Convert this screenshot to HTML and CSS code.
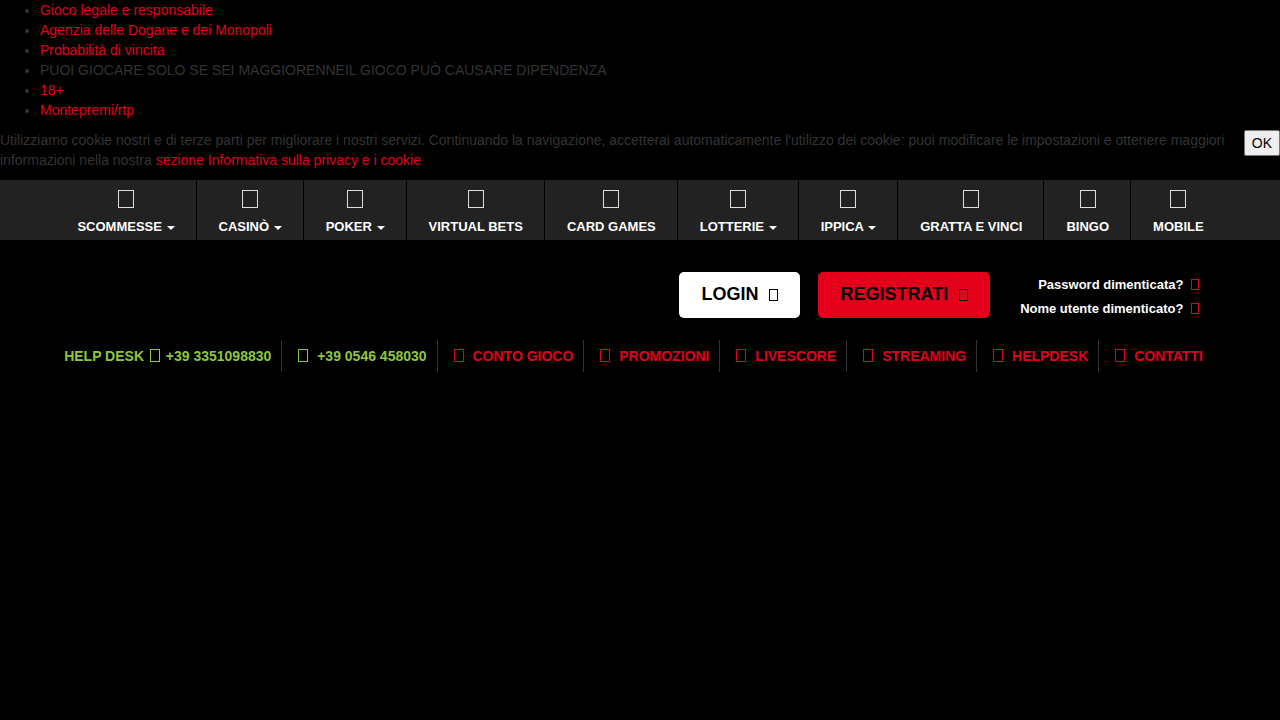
FILE: index.html
```html
<!DOCTYPE html>
<html lang="it">
<head>
<meta charset="UTF-8">
<title>Scommesse</title>
<link rel="stylesheet" href="styles.css">
</head>
<body>

<ul class="avvisi">
    <li><a href="#">Gioco legale e responsabile</a></li>
    <li><a href="#">Agenzia delle Dogane e dei Monopoli</a></li>
    <li><a href="#">Probabilità di vincita</a></li>
    <li class="grigio">PUOI GIOCARE SOLO SE SEI MAGGIORENNEIL GIOCO PUÒ CAUSARE DIPENDENZA</li>
    <li><a href="#">18+</a></li>
    <li><a href="#">Montepremi/rtp</a></li>
</ul>

<div class="cookie">
    <p class="cookie-testo">Utilizziamo cookie nostri e di terze parti per migliorare i nostri servizi. Continuando la navigazione, accetterai automaticamente l'utilizzo dei cookie: puoi modificare le impostazioni e ottenere maggiori informazioni nella nostra <a href="#">sezione Informativa sulla privacy e i cookie</a></p>
    <button class="cookie-ok">OK</button>
</div>

<nav class="menu">
    <a href="#" class="voce"><span class="icona"></span><span>SCOMMESSE <span class="caret"></span></span></a>
    <a href="#" class="voce"><span class="icona"></span><span>CASINÒ <span class="caret"></span></span></a>
    <a href="#" class="voce"><span class="icona"></span><span>POKER <span class="caret"></span></span></a>
    <a href="#" class="voce"><span class="icona"></span><span>VIRTUAL BETS</span></a>
    <a href="#" class="voce"><span class="icona"></span><span>CARD GAMES</span></a>
    <a href="#" class="voce"><span class="icona"></span><span>LOTTERIE <span class="caret"></span></span></a>
    <a href="#" class="voce"><span class="icona"></span><span>IPPICA <span class="caret"></span></span></a>
    <a href="#" class="voce"><span class="icona"></span><span>GRATTA E VINCI</span></a>
    <a href="#" class="voce"><span class="icona"></span><span>BINGO</span></a>
    <a href="#" class="voce"><span class="icona"></span><span>MOBILE</span></a>
</nav>

<div class="accesso">
    <a href="#" class="btn btn-login">LOGIN <span class="tofu"></span></a>
    <a href="#" class="btn btn-registrati">REGISTRATI <span class="tofu"></span></a>
    <div class="recupero">
        <a href="#">Password dimenticata? <span class="tofu rosso"></span></a>
        <a href="#">Nome utente dimenticato? <span class="tofu rosso"></span></a>
    </div>
</div>

<div class="servizi">
    <span class="servizio verde">HELP DESK <span class="tofu stretto"></span> +39 3351098830</span>
    <span class="servizio verde"><span class="tofu"></span> +39 0546 458030</span>
    <a href="#" class="servizio"><span class="tofu"></span> CONTO GIOCO</a>
    <a href="#" class="servizio"><span class="tofu"></span> PROMOZIONI</a>
    <a href="#" class="servizio"><span class="tofu"></span> LIVESCORE</a>
    <a href="#" class="servizio"><span class="tofu"></span> STREAMING</a>
    <a href="#" class="servizio"><span class="tofu"></span> HELPDESK</a>
    <a href="#" class="servizio"><span class="tofu"></span> CONTATTI</a>
</div>

</body>
</html>
```

FILE: styles.css
```css
body {
    margin: 0;
    background-color: #000;
    font-family: "Liberation Sans", Arial, sans-serif;
    font-size: 14px;
    color: #333;
}

a {
    color: #e2001a;
    text-decoration: none;
}

.avvisi {
    margin: 0;
    padding-left: 40px;
    line-height: 20px;
}

.avvisi li {
    color: #333;
}

.cookie {
    display: flex;
    align-items: flex-start;
    margin-top: 10px;
}

.cookie-testo {
    flex: 1;
    margin: 0;
    line-height: 20px;
    color: #333;
}

.cookie-ok {
    margin-left: 16px;
    padding: 4px 7px;
    font-family: "Liberation Sans", Arial, sans-serif;
    font-size: 14px;
    color: #000;
    background-color: #efefef;
    border: 1px solid #767676;
    border-radius: 2px;
}

/* barra dei giochi */
.menu {
    display: flex;
    justify-content: center;
    margin-top: 10px;
    height: 60px;
    background-color: #222;
}

.voce {
    display: flex;
    flex-direction: column;
    align-items: center;
    padding: 10px 21px 0 22px;
    border-left: 1px solid #000;
    color: #fff;
    font-size: 13px;
    font-weight: bold;
    line-height: 18px;
    white-space: nowrap;
}

.voce:first-child {
    border-left: none;
}

.icona {
    display: block;
    width: 14px;
    height: 16px;
    border: 1px solid #ddd;
    margin-bottom: 10px;
}

.caret {
    display: inline-block;
    width: 0;
    height: 0;
    margin-left: 1px;
    vertical-align: middle;
    border-top: 4px solid #fff;
    border-left: 4px solid transparent;
    border-right: 4px solid transparent;
}

.tofu {
    display: inline-block;
    width: 8px;
    height: 11px;
    border: 1px solid currentColor;
    vertical-align: -1px;
}

/* login */
.accesso {
    display: flex;
    justify-content: flex-end;
    align-items: flex-start;
    margin-top: 32px;
    padding-right: 81px;
}

.btn {
    display: block;
    height: 46px;
    line-height: 44px;
    padding: 0 22px 0 22px;
    border-radius: 5px;
    font-size: 18px;
    font-weight: bold;
    color: #000;
}

.btn .tofu {
    width: 7px;
    height: 10px;
    margin-left: 6px;
}

.btn-login {
    background-color: #fff;
}

.btn-registrati {
    margin-left: 18px;
    background-color: #e2001a;
}

.recupero {
    display: flex;
    flex-direction: column;
    align-items: flex-end;
    margin: 1px 0 0 30px;
}

.recupero a {
    color: #fff;
    font-size: 13px;
    font-weight: bold;
    line-height: 24px;
}

.tofu.rosso {
    color: #e2001a;
    width: 6px;
    height: 9px;
    margin-left: 4px;
}

/* contatti */
.servizi {
    display: flex;
    justify-content: center;
    margin-top: 19px;
    padding-right: 18px;
}

.servizio {
    padding: 0 10px 0 15px;
    border-left: 1px solid #333;
    line-height: 32px;
    font-size: 14px;
    font-weight: bold;
    color: #e2001a;
    white-space: nowrap;
}

.servizio:first-child {
    border-left: none;
}

.servizio .tofu {
    margin: 0 5px 0 1px;
}

.servizio .tofu.stretto {
    margin: 0 2px;
}

.verde {
    color: #8dc63f;
}
```
